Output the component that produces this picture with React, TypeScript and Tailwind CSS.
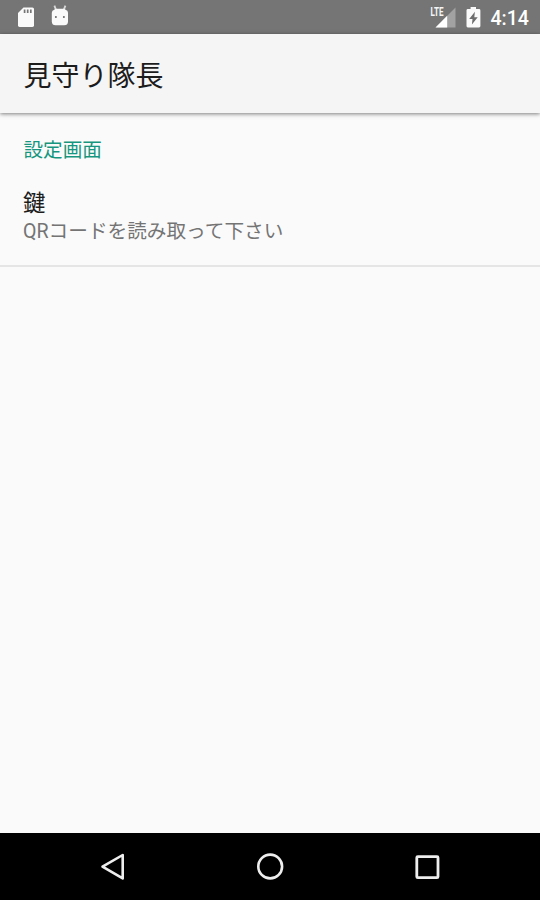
function StatusBar() {
  return (
    <div className="flex h-[34px] shrink-0 items-start justify-between bg-[#757575] text-white">
      <div className="flex pl-[18px]">
        {/* SD card */}
        <svg className="mt-[7px] h-[20px] w-[16px]" viewBox="0 0 16 20">
          <path
            d="M5.5 0.5H14.4Q16 0.5 16 2.1V18.6Q16 20 14.4 20H1.6Q0 20 0 18.6V6Z"
            fill="#fafafa"
          />
          <path d="M6.6 2.4V6M9.7 2.4V6M12.8 2.4V6" stroke="#757575" strokeWidth="1.7" />
        </svg>
        {/* Debugging */}
        <svg className="mt-[5px] ml-[17px] h-[21px] w-[18px]" viewBox="0 0 18 21">
          <path d="M3.4 0.6L5 4.9M14.4 0.6L12.8 4.9" stroke="#d8d8d8" strokeWidth="1.8" />
          <path
            d="M0.8 8Q0.8 6.4 2 5.6L4.8 3.8H13L15.8 5.6Q17 6.4 17 8V16.8Q16.8 20.3 13.2 20.3H4.6Q1 20.3 0.8 16.8Z"
            fill="#fafafa"
          />
          <circle cx="4.9" cy="12" r="1" fill="#666666" />
          <circle cx="12.9" cy="12" r="1" fill="#666666" />
        </svg>
      </div>

      <div className="flex pr-[11px]">
        {/* Signal */}
        <svg className="h-[28px] w-[26px] overflow-visible" viewBox="0 0 26 28">
          <path d="M25.5 7.5V27.5H5.5Z" fill="#a2a2a2" />
          <path d="M17.2 15.8V27.5H5.5Z" fill="#ffffff" />
          <text
            x="0.5"
            y="16.4"
            fill="#f5f5f5"
            fontSize="12.5"
            fontWeight="700"
            fontFamily="Roboto, sans-serif"
            textLength="13"
            lengthAdjust="spacingAndGlyphs"
          >
            LTE
          </text>
        </svg>
        {/* Battery */}
        <svg className="mt-[7px] ml-[10px] h-[21px] w-[15px]" viewBox="0 0 15 21">
          <path
            d="M4.6 0H10V2H13Q14.4 2 14.4 3.4V19Q14.4 20.4 13 20.4H1.9Q0.5 20.4 0.5 19V3.4Q0.5 2 1.9 2H4.6Z"
            fill="#fafafa"
          />
          <path d="M8.9 4.7L3.2 12H6.5L5.9 17.6L11.7 10.2H8.3Z" fill="#6d6d6d" />
        </svg>
        <span className="mt-[7px] ml-[9px] text-[19.6px] leading-[23px] font-medium">4:14</span>
      </div>
    </div>
  );
}

function NavigationBar() {
  return (
    <div className="flex h-[67px] shrink-0 items-center justify-center gap-[129px] bg-black">
      <svg className="h-[28px] w-[28px]" viewBox="0 0 28 28" fill="none">
        <path
          d="M23.7 2V25.4L3.5 13.7Z"
          stroke="#eeeeee"
          strokeWidth="2.6"
          strokeLinejoin="round"
        />
      </svg>
      <svg className="h-[28px] w-[28px]" viewBox="0 0 28 28" fill="none">
        <circle cx="14.2" cy="13.5" r="11.9" stroke="#eeeeee" strokeWidth="2.6" />
      </svg>
      <svg className="h-[28px] w-[28px]" viewBox="0 0 28 28" fill="none">
        <rect x="3.8" y="3.7" width="21.2" height="21" rx="1" stroke="#eeeeee" strokeWidth="2.8" />
      </svg>
    </div>
  );
}

export default function App() {
  return (
    <div className="flex h-[900px] w-[540px] flex-col overflow-hidden bg-[#fafafa] font-['Roboto','Noto_Sans_CJK_JP',sans-serif]">
      <StatusBar />

      <header className="z-10 flex h-[79px] shrink-0 items-center bg-[#f5f5f5] px-[23.4px] pt-[7px] shadow-[0_1px_4px_rgba(0,0,0,0.5)]">
        <h1 className="text-[28px] leading-[40px] text-[#1c1c1c]">見守り隊長</h1>
      </header>

      <main className="flex-1">
        <h2 className="px-[23.5px] pt-[24px] text-[19.6px] leading-[28px] text-[#16967f]">
          設定画面
        </h2>
        {/* Preference row */}
        <div className="h-[102px] border-b-2 border-[#e5e5e5] px-[23px] pt-[23px]">
          <p className="text-[22.4px] leading-[30px] text-[#1c1c1c]">鍵</p>
          <p className="text-[19.65px] leading-[27px] text-[#747474]">
            QRコードを読み取って下さい
          </p>
        </div>
      </main>

      <NavigationBar />
    </div>
  );
}
